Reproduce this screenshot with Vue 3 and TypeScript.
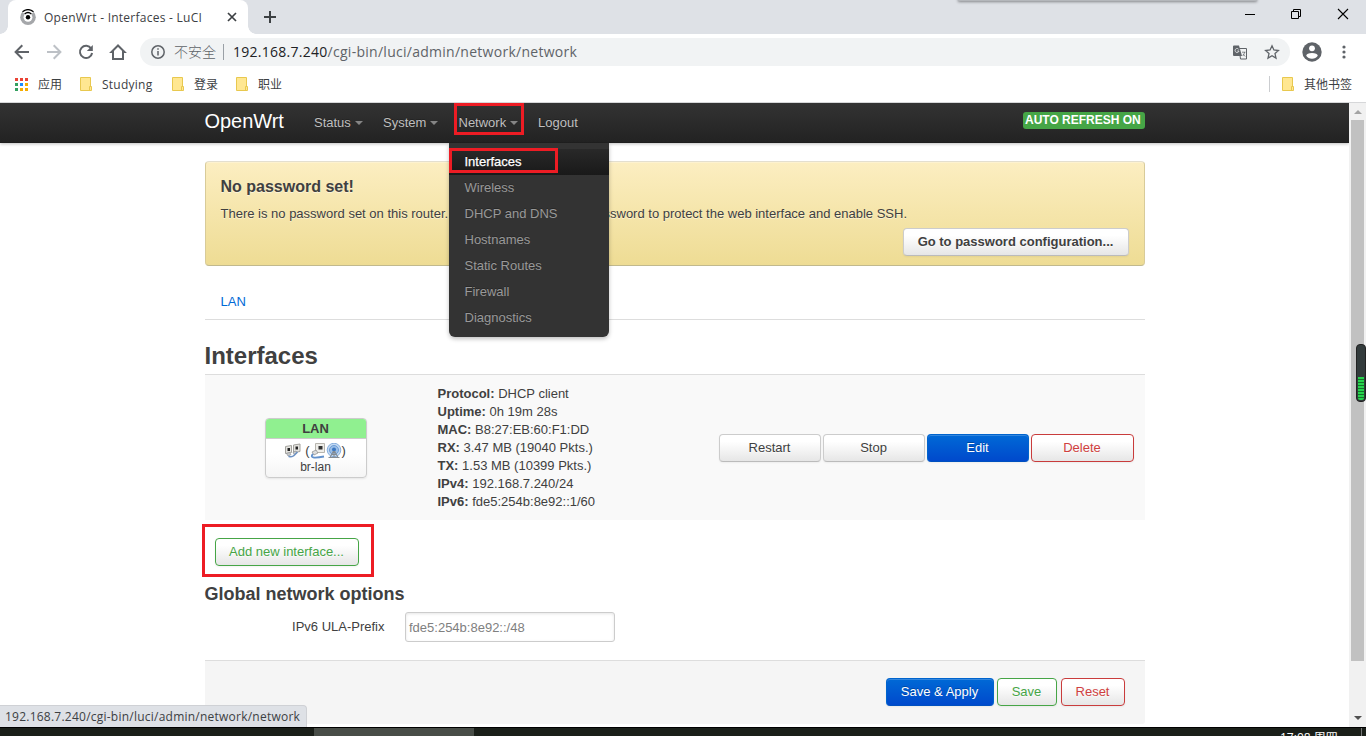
<script setup lang="ts">
interface NavItem { label: string; width: number; caret: boolean; open?: boolean }
interface Detail { key: string; value: string }

const nav: NavItem[] = [
  { label: 'Status', width: 69, caret: true },
  { label: 'System', width: 76, caret: true },
  { label: 'Network', width: 79, caret: true, open: true },
  { label: 'Logout', width: 60, caret: false },
]
const menu: string[] = ['Interfaces', 'Wireless', 'DHCP and DNS', 'Hostnames', 'Static Routes', 'Firewall', 'Diagnostics']
const details: Detail[] = [
  { key: 'Protocol', value: 'DHCP client' },
  { key: 'Uptime', value: '0h 19m 28s' },
  { key: 'MAC', value: 'B8:27:EB:60:F1:DD' },
  { key: 'RX', value: '3.47 MB (19040 Pkts.)' },
  { key: 'TX', value: '1.53 MB (10399 Pkts.)' },
  { key: 'IPv4', value: '192.168.7.240/24' },
  { key: 'IPv6', value: 'fde5:254b:8e92::1/60' },
]
const bookmarks: { label: string; cls: string }[] = [
  { label: 'Studying', cls: 'bm-a' },
  { label: '登录', cls: 'bm-b' },
  { label: '职业', cls: 'bm-c' },
]
const appDots: string[] = ['#ea4335', '#ea4335', '#ea4335', '#34a060', '#1a8cff', '#f5ac00', '#34a060', '#f5ac00', '#f5ac00']
</script>

<template>
  <div class="screen">
    <div class="tabstrip">
      <div class="tab">
        <svg class="favicon" width="16" height="16" viewBox="0 0 16 16">
          <circle cx="8" cy="8.200" r="7.800" fill="#a5a7aa" />
          <circle cx="8" cy="8.300" r="4.400" fill="#fff" />
          <path d="M3 3.500Q8-1.200 13 3.500M4.600 5.400Q8 2.300 11.400 5.400" fill="none" stroke="#fff" stroke-width="2.600" />
          <path d="M2.500 2.700Q8-1.500 13.500 2.700M4.600 5Q8 2 11.400 5" fill="none" stroke="#000" stroke-width="1.300" />
          <circle cx="8" cy="8.200" r="2.200" fill="#000" />
        </svg>
        <span class="tab-title">OpenWrt - Interfaces - LuCI</span>
        <svg class="tab-close" width="10" height="10" viewBox="0 0 10 10"><path d="M1 1l8 8M9 1l-8 8" stroke="#3c4043" stroke-width="1.700" /></svg>
        <i class="flare left"></i><i class="flare right"></i>
      </div>
      <svg class="newtab" width="12" height="12" viewBox="0 0 12 12"><path d="M6 0v12M0 6h12" stroke="#3c4043" stroke-width="2" /></svg>
      <div class="win-shadow"></div>
      <div class="winbtns">
        <svg width="10" height="12" viewBox="0 0 10 12"><path d="M0 6.500h10" stroke="#000" /></svg>
        <svg width="10" height="12" viewBox="0 0 10 12"><path d="M.5 3.500h7v7h-7zM2.500 3.500v-2h7v7h-2" fill="none" stroke="#000" /></svg>
        <svg width="12" height="12" viewBox="0 0 12 12"><path d="M1 1l10 10M11 1L1 11" stroke="#000" stroke-width="1.100" /></svg>
      </div>
    </div>

    <div class="toolbar">
      <svg class="t-back" width="16" height="16" viewBox="0 0 16 16"><path d="M15 8H2M8.300 1.300L1.600 8l6.700 6.700" fill="none" stroke="#5f6368" stroke-width="2" /></svg>
      <svg class="t-fwd" width="16" height="16" viewBox="0 0 16 16"><path d="M1 8h13M7.700 1.300L14.400 8l-6.700 6.700" fill="none" stroke="#bdc1c6" stroke-width="2" /></svg>
      <svg class="t-reload" width="16" height="16" viewBox="0 0 16 16"><path d="M13.200 4.600A6.100 6.100 0 1 0 14.100 9" fill="none" stroke="#5f6368" stroke-width="2" /><path d="M14.800 1v6H8.800z" fill="#5f6368" /></svg>
      <svg class="t-home" width="18" height="18" viewBox="0 0 18 18"><path d="M9 2.500L2.500 9H4v7h10V9h1.500z" fill="none" stroke="#5f6368" stroke-width="2" /></svg>
      <div class="omnibox">
        <svg class="info" width="14" height="14" viewBox="0 0 14 14"><circle cx="7" cy="7" r="6.200" fill="none" stroke="#5f6368" stroke-width="1.500" /><path d="M7 6v4.500M7 3.300v1.500" stroke="#5f6368" stroke-width="1.500" /></svg>
        <span class="insecure">不安全</span>
        <i class="sep"></i>
        <span class="url"><b>192.168.7.240</b>/cgi-bin/luci/admin/network/network</span>
        <svg class="translate" width="14" height="15" viewBox="0 0 14 15">
          <path d="M6 3.500h7.500v10.500H7.500z" fill="#f1f3f4" stroke="#5f6368" />
          <path d="M1 .5h5l3 10.500H1a1 1 0 0 1-1-1V1.500a1 1 0 0 1 1-1z" fill="#5f6368" />
          <path d="M5.800 4.500A2 2 0 1 0 6 6H4.300" fill="none" stroke="#e5e7e9" stroke-width=".9" />
          <path d="M9 7.200h3.500M11.700 7q-.8 3-2 4M10 9l2.200 2.500" fill="none" stroke="#6b6f74" stroke-width=".8" />
        </svg>
        <svg class="star" width="16" height="16" viewBox="0 0 16 16"><path d="M8 1.800l1.900 4.200 4.500.5-3.400 3.100 1 4.500L8 11.800l-4 2.300 1-4.500L1.600 6.500l4.500-.5z" fill="none" stroke="#5f6368" stroke-width="1.300" /></svg>
      </div>
      <svg class="avatar" width="20" height="20" viewBox="0 0 20 20"><circle cx="10" cy="10" r="9.700" fill="#5f6368" /><circle cx="10" cy="6.300" r="2.900" fill="#fff" /><path d="M4.200 13.800Q4.800 11 10 11t5.800 2.800Q13.800 16.800 10 16.800t-5.800-3z" fill="#fff" /></svg>
      <svg class="dots" width="4" height="14" viewBox="0 0 4 14"><g fill="#5f6368"><circle cx="2" cy="2" r="1.600" /><circle cx="2" cy="7" r="1.600" /><circle cx="2" cy="12" r="1.600" /></g></svg>
    </div>

    <div class="bookmarks">
      <svg class="apps" width="13" height="13" viewBox="0 0 13 13">
        <rect v-for="(c, i) in appDots" :key="i" :x="(i % 3) * 5" :y="Math.floor(i / 3) * 5" width="3" height="3" :fill="c" />
      </svg>
      <span class="apps-label">应用</span>
      <div v-for="b in bookmarks" :key="b.label" class="bm" :class="b.cls">
        <svg width="12" height="14" viewBox="0 0 12 14"><path d="M.5.500h10v9h1v4H.5z" fill="#ffe791" stroke="#e8c84f" /><path d="M9.500 13v-3.500h1.500" fill="none" stroke="#e8c84f" /></svg>
        <span>{{ b.label }}</span>
      </div>
      <div class="others">
        <svg width="12" height="14" viewBox="0 0 12 14"><path d="M.5.500h10v9h1v4H.5z" fill="#ffe791" stroke="#e8c84f" /><path d="M9.500 13v-3.500h1.500" fill="none" stroke="#e8c84f" /></svg>
        <span>其他书签</span>
      </div>
    </div>

    <div class="viewport">
      <div class="page">
        <header>
          <div class="container bar">
            <span class="brand">OpenWrt</span>
            <nav>
              <div v-for="n in nav" :key="n.label" class="nav-item" :style="{ width: n.width + 'px' }">
                <span>{{ n.label }}</span><i v-if="n.caret" class="caret"></i>
                <div v-if="n.open" class="mark mark-network"></div>
                <div v-if="n.open" class="dropdown">
                  <ul>
                    <li v-for="(m, i) in menu" :key="m" :class="{ active: i === 0 }">{{ m }}</li>
                  </ul>
                  <div class="mark mark-interfaces"></div>
                </div>
              </div>
            </nav>
            <span class="refresh">AUTO REFRESH ON</span>
          </div>
        </header>

        <main class="container">
          <section class="alert">
            <h4>No password set!</h4>
            <p>There is no password set on this router. Please configure a root password to protect the web interface and enable SSH.</p>
            <div class="alert-actions"><button class="btn strong">Go to password configuration...</button></div>
          </section>

          <div class="tabs"><a>LAN</a></div>
          <h2>Interfaces</h2>

          <div class="row">
            <div class="cell-box">
              <div class="ifacebox">
                <div class="ifhead">LAN</div>
                <div class="ifbody">
                  <div class="ificons">
                    <svg width="16" height="16" viewBox="0 0 16 16">
                      <path d="M.5 3.500l6-1v7l-6 1zM8.500 2l6.500-1v7.500l-6.500 1z" fill="#e4e3df" stroke="#a3a29d" />
                      <path d="M2.500 5h2.500v3H2.500zM10.500 3.500h2.500v3h-2.500z" fill="#222" />
                      <path d="M1.500 10.500l3-1 1.500 2-3 1.500zM8 9l3-1 1 2-3 1.500z" fill="#c9cbcc" stroke="#85888c" stroke-width=".6" />
                      <path d="M3.500 13.200q3.500 1.300 5.500-.700t3.500-3.500" fill="none" stroke="#6f93c4" stroke-width="1.600" />
                    </svg>
                    <span class="paren">(</span>
                    <svg width="16" height="16" viewBox="0 0 16 16">
                      <path d="M5.500.5h9v9h-9z" fill="#eeede9" stroke="#b7b5ae" />
                      <path d="M8.500 3h4v3.500h-4z" fill="#333" />
                      <path d="M2 9l4-2 2 3-4 2z" fill="#ddd" stroke="#888" stroke-width=".7" />
                      <path d="M3 11q-3 3 1 3.500 4 .2 10-1" fill="none" stroke="#6290cb" stroke-width="1.800" />
                    </svg>
                    <svg width="16" height="16" viewBox="0 0 16 16">
                      <circle cx="8" cy="7" r="6.800" fill="#c3d9f2" stroke="#86aedd" />
                      <circle cx="8" cy="7" r="4.500" fill="#9bbfe8" stroke="#6c9cd6" />
                      <circle cx="8" cy="6.500" r="2" fill="#3a76c0" />
                      <path d="M7.500 8L4 14.500M8.500 8l3.500 6.500M8 8v6M5.500 11.500h5M2.500 14.500h11" fill="none" stroke="#848b93" stroke-width="1.100" />
                    </svg>
                    <span class="paren">)</span>
                  </div>
                  <div class="ifname">br-lan</div>
                </div>
              </div>
            </div>
            <div class="details">
              <div v-for="d in details" :key="d.key"><strong>{{ d.key }}:</strong> {{ d.value }}</div>
            </div>
            <div class="actions">
              <button class="btn">Restart</button>
              <button class="btn">Stop</button>
              <button class="btn primary">Edit</button>
              <button class="btn negative">Delete</button>
            </div>
          </div>

          <div class="add"><button class="btn positive">Add new interface...</button><div class="mark mark-add"></div></div>

          <h3>Global network options</h3>
          <div class="field">
            <label>IPv6 ULA-Prefix</label>
            <div class="input">fde5:254b:8e92::/48</div>
          </div>

          <footer>
            <button class="btn primary">Save &amp; Apply</button>
            <button class="btn positive">Save</button>
            <button class="btn negative">Reset</button>
          </footer>
        </main>
      </div>

      <div class="scrollbar">
        <i class="up"></i>
        <div class="thumb"></div>
        <i class="down"></i>
      </div>
      <div class="status">192.168.7.240/cgi-bin/luci/admin/network/network</div>
      <div class="meter"><div class="meter-fill"></div></div>
    </div>

    <div class="taskbar">
      <div class="task"></div>
      <span class="clock">17:08 周四</span>
      <i class="desk"></i>
    </div>
  </div>
</template>

<style>
html, body { margin: 0; overflow: hidden; background: #fff; }
</style>

<style scoped>
* { box-sizing: border-box; }
svg { display: block; flex: none; }
.screen { width: 1366px; height: 736px; overflow: hidden; display: flex; flex-direction: column; background: #fff; font-family: "Open Sans", "Noto Sans CJK SC", sans-serif; }

.tabstrip { height: 34px; flex: none; background: #dee1e6; display: flex; align-items: flex-start; position: relative; }
.tab { position: relative; width: 240px; height: 34px; margin-left: 8px; background: #fff; border-radius: 8px 8px 0 0; display: flex; align-items: center; padding-left: 12px; }
.tab-title { font-size: 12px; color: #3c4043; margin-left: 8px; width: 183px; white-space: nowrap; letter-spacing: .25px; }
.flare { position: absolute; bottom: 0; width: 8px; height: 8px; }
.flare.left { left: -8px; background: radial-gradient(circle at 0 0, transparent 7.500px, #fff 8px); }
.flare.right { right: -8px; background: radial-gradient(circle at 100% 0, transparent 7.500px, #fff 8px); }
.newtab { margin: 11px 0 0 16px; }
.win-shadow { position: absolute; left: 958px; top: -4px; width: 299px; height: 5px; background: #b4b7bb; box-shadow: 0 1px 3px rgba(0, 0, 0, .4); }
.winbtns { margin-left: auto; margin-right: 17px; padding-top: 8px; display: flex; gap: 36px; }

.toolbar { height: 36px; flex: none; display: flex; align-items: center; }
.t-back { margin-left: 14px; }
.t-fwd { margin-left: 16px; }
.t-reload { margin-left: 16px; }
.t-home { margin-left: 15px; }
.omnibox { width: 1150px; height: 28px; margin: 4px 0 4px 13px; border-radius: 14px; background: #f1f3f4; display: flex; align-items: center; padding-left: 11px; }
.insecure { font-size: 14px; line-height: 20px; width: 43px; margin-left: 9px; padding-bottom: 2px; color: #5f6368; font-family: "Noto Sans CJK SC", sans-serif; font-weight: 300; white-space: nowrap; }
.sep { width: 1px; height: 16px; margin-left: 6px; background: #9aa0a6; }
.url { width: 990px; margin-left: 9px; font-size: 14px; line-height: 20px; color: #5f6368; letter-spacing: .27px; }
.url b { font-weight: 400; color: #202124; }
.star { margin-left: 18px; }
.translate { margin-left: 10px; }
.star { margin-left: 17px; }
.avatar { margin-left: 12px; }
.dots { margin-left: 20px; }

.bookmarks { height: 33px; flex: none; display: flex; align-items: center; border-bottom: 1px solid #d6d7d9; font-size: 12px; color: #3c4043; padding-bottom: 4px; }
.apps { margin-left: 15px; }
.apps-label { margin-left: 10px; width: 24px; }
.bm { display: flex; align-items: center; gap: 10px; }
.bm-a { margin-left: 18px; width: 74px; letter-spacing: .25px; }
.bm-b { margin-left: 18px; width: 46px; }
.bm-c { margin-left: 18px; }
.others { margin-left: auto; margin-right: 14px; height: 16px; border-left: 1px solid #cbcdd0; padding-left: 12px; display: flex; align-items: center; gap: 10px; white-space: nowrap; }

.viewport { position: relative; height: 624px; flex: none; display: flex; overflow: hidden; }
.page { width: 1349px; height: 624px; overflow: hidden; font: 13px/18px "Liberation Sans", Arial, sans-serif; color: #404040; }
.container { width: 940px; margin-left: 204.500px; }
header { height: 40px; background: linear-gradient(#333, #222); box-shadow: 0 1px 3px rgba(0, 0, 0, .25), inset 0 -1px 0 rgba(0, 0, 0, .1); position: relative; z-index: 3; }
.bar { display: flex; height: 40px; }
.brand { width: 109.500px; font-size: 20px; line-height: 36px; color: #fff; letter-spacing: -.05px; }
nav { display: flex; flex: 1; }
.nav-item { position: relative; line-height: 39px; color: #bfbfbf; text-shadow: 0 -1px 0 rgba(0, 0, 0, .25); white-space: nowrap; }
.caret { display: inline-block; border: 4px solid transparent; border-top-color: #858585; border-bottom: 0; margin-left: 4px; vertical-align: 2px; }
.nav-item:nth-child(3) > span { margin-left: -.500px; }
.nav-item:nth-child(3) .caret { margin-left: 3.500px; }
.refresh { height: 17px; margin-top: 9px; padding: 0 3px 0 2.500px; border-radius: 3px; background: #46a546; color: #fff; font-weight: 700; font-size: 12px; line-height: 16px; white-space: nowrap; width: 122px; }
.dropdown { position: absolute; left: -10px; top: 40px; width: 160px; height: 194px; padding: 6px 0; background: #333; border-radius: 0 0 6px 6px; box-shadow: 0 2px 4px rgba(0, 0, 0, .25); }
.dropdown ul { margin: 0; padding: 0; list-style: none; }
.dropdown li { height: 26px; padding-left: 15.500px; line-height: 25px; color: #999; }
.dropdown li.active { color: #fff; background: linear-gradient(#292929, #191919); -webkit-text-stroke: .250px #fff; }
.mark { position: absolute; border: 3px solid #ed1c24; pointer-events: none; }
.mark-network { left: -5px; top: 0; width: 70px; height: 32px; }
.mark-interfaces { left: 0; top: 5px; width: 109px; height: 25px; }

.alert { height: 105px; margin-top: 18px; border: 1px solid; border-color: #e4dfcf #d8cb99 #c1b98d; border-radius: 4px; background: linear-gradient(#fceec1, #eedc94); padding: 11px 15px 0; text-shadow: 0 1px 0 rgba(255, 255, 255, .5); box-shadow: inset 0 1px 0 rgba(255, 255, 255, .25); }
h2, h3, h4, p { margin: 0; }
h4 { font-size: 16px; line-height: 28px; }
p { line-height: 18px; margin-top: 4px; white-space: nowrap; }
.alert-actions { display: flex; justify-content: flex-end; margin-top: 5px; }
.btn { height: 28px; padding: 0 13px 1px; border: 1px solid #ccc; border-bottom-color: #bbb; border-radius: 4px; background: linear-gradient(#fff, #fff 25%, #e6e6e6); box-shadow: inset 0 1px 0 rgba(255, 255, 255, .2), 0 1px 2px rgba(0, 0, 0, .05); font: 13px/25px "Liberation Sans", Arial, sans-serif; color: #404040; text-shadow: 0 1px 1px rgba(255, 255, 255, .75); white-space: nowrap; text-align: center; }
.btn.strong { font-weight: 700; width: 226px; }
.btn.primary { color: #fff; background: linear-gradient(#0069d6, #0049cc); border-color: #0064cd #0064cd #0050c0; text-shadow: 0 -1px 0 rgba(0, 0, 0, .25); }
.btn.positive { color: #46a546; border-color: #46a546; }
.btn.negative { color: #cf4040; border-color: #c93c3c; }

.tabs { height: 54px; border-bottom: 1px solid #ddd; padding: 27px 16px 0; line-height: 18px; color: #0069d6; }
h2 { font-size: 24px; line-height: 36px; height: 54px; padding-top: 18px; }
.row { height: 146px; border-top: 1px solid #ddd; background: #f9f9f9; display: flex; align-items: center; }
.cell-box { width: 222px; display: flex; justify-content: center; }
.ifacebox { width: 102px; height: 60px; border: 1px solid #ccc; border-radius: 4px; background: linear-gradient(#fff 60%, #f5f5f5); overflow: hidden; text-align: center; box-shadow: 0 1px 2px rgba(0, 0, 0, .08); }
.ifhead { height: 20px; background: #90f090; border-bottom: 1px solid #ccc; font-weight: 700; line-height: 20px; }
.ifbody { padding-top: 4px; }
.ificons { display: flex; justify-content: center; height: 16px; }
.paren { line-height: 15px; font-size: 13px; }
.ificons svg + .paren { margin-left: 4px; }
.ificons svg:last-of-type + .paren { margin-left: 0; }
.ifname { line-height: 16px; font-size: 12px; }
.details { width: 282px; padding-left: 11px; line-height: 18px; white-space: nowrap; }
.actions { flex: 1; display: flex; justify-content: flex-end; gap: 2px; padding-right: 11px; }
.actions .btn { width: 102px; }
.actions .btn.negative { width: 103px; }

.add { position: relative; height: 59px; padding: 18px 10px 0; }
.add .btn { width: 144px; display: block; }
.mark-add { left: -3px; top: 4px; width: 172px; height: 53px; }
h3 { font-size: 18px; line-height: 30px; }
.field { height: 51px; padding-top: 3px; display: flex; }
.field label { width: 180px; text-align: right; line-height: 29px; }
.input { width: 210px; height: 30px; margin-left: 20px; padding-left: 3.500px; border: 1px solid #ccc; border-radius: 3px; box-shadow: inset 0 1px 3px rgba(0, 0, 0, .1); line-height: 29px; color: #808080; background: #fff; }
footer { height: 64px; border-top: 1px solid #ddd; border-radius: 0 0 3px 3px; background: #f5f5f5; display: flex; justify-content: flex-end; padding: 17px 20px 0 0; }
footer .btn { width: 60px; margin-left: 3px; padding-left: 0; padding-right: 0; }
footer .btn.primary { width: 108px; }
footer .btn.negative { width: 64px; margin-left: 4px; }

.scrollbar { width: 17px; height: 624px; background: #f1f1f1; display: flex; flex-direction: column; align-items: center; }
.up { margin-top: 7px; border: 4px solid transparent; border-top: 0; border-bottom-color: #a3a3a3; }
.down { margin-top: 55px; border: 4px solid transparent; border-bottom: 0; border-top-color: #505050; }
.thumb { width: 13px; height: 541px; margin-top: 6px; background: #c1c1c1; }
.status { position: absolute; left: 0; bottom: 0; width: 307px; height: 22px; background: #dee1e6; border: 1px solid #cfd1d5; border-left: 0; border-bottom: 0; border-radius: 0 4px 0 0; font-size: 12px; line-height: 22px; color: #3c4043; padding-left: 5px; letter-spacing: .235px; white-space: nowrap; }
.meter { position: absolute; right: 0; top: 241px; width: 10px; height: 58px; border-radius: 4px; background: #333b3c; border: 1px solid #222; display: flex; align-items: flex-end; padding: 1px; }
.meter-fill { width: 100%; height: 23px; border-radius: 0 0 2px 2px; background: repeating-linear-gradient(#27d34d 0 2px, #14752b 2px 3px); }

.taskbar { height: 9px; flex: none; overflow: hidden; background: #1a1f19; border-top: 1px solid #000; display: flex; }
.task { width: 160px; height: 8px; margin-left: 314px; background: #484d47; }
.clock { margin-left: 806px; padding-top: 2px; font-size: 12px; line-height: 16px; color: #fff; white-space: nowrap; width: 60px; }
.desk { width: 1px; height: 8px; background: #777; margin-left: 21px; }
</style>
